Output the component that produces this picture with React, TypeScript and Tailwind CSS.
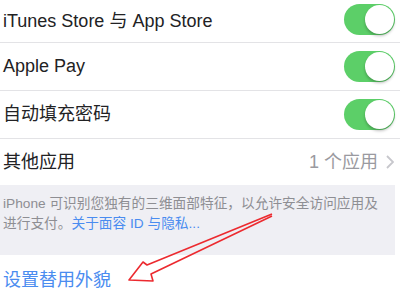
import React from 'react'

const font = { fontFamily: '"Liberation Sans", "Noto Sans CJK SC", sans-serif' }

function Toggle() {
  return (
    <div className="relative w-[51px] h-[31px] rounded-full bg-[#5ccf68] shrink-0">
      <div className="absolute right-[1px] top-[1px] w-[29px] h-[29px] rounded-full bg-white shadow-[0_2px_3px_rgba(0,0,0,0.25)]" />
    </div>
  )
}

function Row({ label, height, children, last }: { label: string; height: string; children: React.ReactNode; last?: boolean }) {
  return (
    <div className={`flex items-center justify-between pl-[3px] pr-[5px] ${height} ${last ? '' : 'border-b border-[#e3e3e6]'}`}>
      <span className="text-[18px] text-[#222224]">{label}</span>
      {children}
    </div>
  )
}

export default function App() {
  return (
    <div className="relative w-[400px] h-[300px] overflow-hidden bg-white" style={font}>
      <div className="flex flex-col">
        <Row label="iTunes Store 与 App Store" height="h-[43px]">
          <div className="-mt-[3px]"><Toggle /></div>
        </Row>
        <Row label="Apple Pay" height="h-[48px]">
          <Toggle />
        </Row>
        <Row label="自动填充密码" height="h-[48px]">
          <Toggle />
        </Row>
        <Row label="其他应用" height="h-[46px]" last>
          <div className="flex items-center gap-[8px] text-[18px] text-[#9a9aa0]">
            <span>1 个应用</span>
            <svg width="8" height="14" viewBox="0 0 8 14" className="mr-[1px]">
              <path d="M1 1l6 6-6 6" fill="none" stroke="#c7c7cc" strokeWidth="1.8" />
            </svg>
          </div>
        </Row>
        <div className="h-[70px] mr-[5px] bg-[#efeff4] pl-[3px] pt-[9px] text-[13.7px] leading-[20px] text-[#8e8e93]">
          <p>iPhone 可识别您独有的三维面部特征，以允许安全访问应用及</p>
          <p>
            进行支付。<span className="text-[#4a8cf0]">关于面容 ID 与隐私...</span>
          </p>
        </div>
        <div className="pl-[3px] pt-[12px] text-[18px] text-[#4a8cf0]">设置替用外貌</div>
      </div>
      <svg className="absolute left-0 top-0 pointer-events-none" width="400" height="300">
        <path
          d="M272 214 L147 265 L143 262 L129 280 L153 281 L151 274 L272 216"
          fill="none"
          stroke="#ec2a2f"
          strokeWidth="1.6"
          strokeLinejoin="round"
        />
      </svg>
    </div>
  )
}
